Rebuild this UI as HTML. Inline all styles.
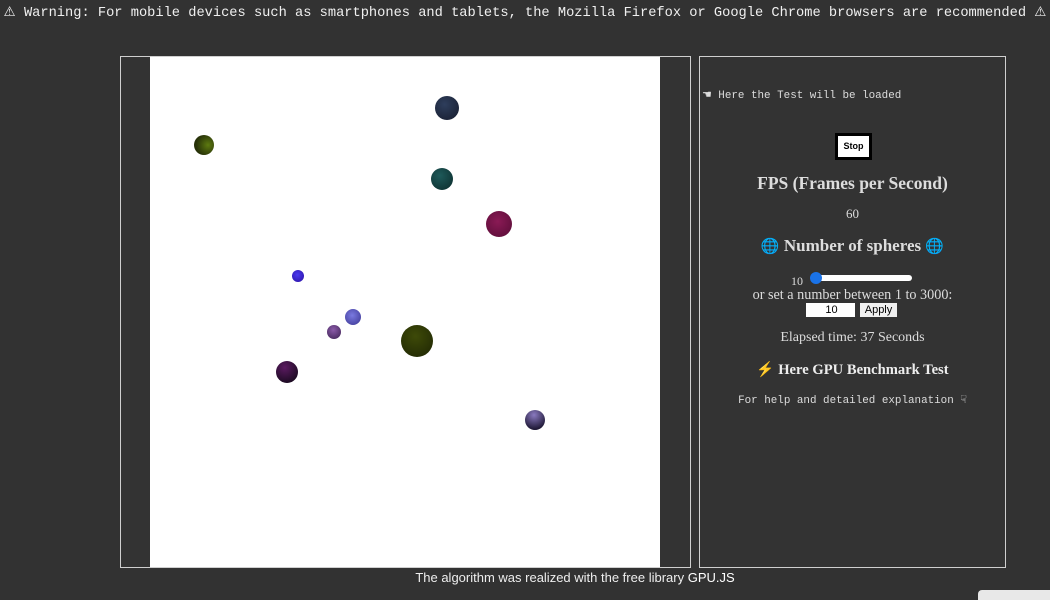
<!DOCTYPE html>
<html><head><meta charset="utf-8"><style>
html,body{margin:0;padding:0;width:1050px;height:600px;overflow:hidden;background:#323232;color:#eee;position:relative}
.warn{position:absolute;left:0;top:4px;width:1050px;text-align:center;font:13.7px "Liberation Mono",monospace;color:#f0f0f0;white-space:nowrap}
.lbox{position:absolute;left:120px;top:56px;width:569px;height:510px;border:1px solid #cfcfcf;background:#333}
.canvas{position:absolute;left:150px;top:57px;width:510px;height:510px;background:#fff}
.rbox{position:absolute;left:699px;top:56px;width:305px;height:510px;border:1px solid #cfcfcf;background:#333;font-family:"Liberation Serif",serif;text-align:center}
.b{position:absolute;border-radius:50%}
.t{position:absolute;left:0;width:305px;text-align:center;white-space:nowrap}
.mono{font-family:"Liberation Mono",monospace;font-size:10.9px;color:#ddd;white-space:nowrap}
.foot{position:absolute;left:0;width:1150px;top:570px;text-align:center;font:13px "Liberation Sans",sans-serif;color:#eee}
</style></head><body>
<div class="warn">⚠ Warning: For mobile devices such as smartphones and tablets, the Mozilla Firefox or Google Chrome browsers are recommended ⚠</div>
<div class="lbox"></div>
<div class="canvas"></div>
<div class="b" style="left:435px;top:96px;width:24px;height:24px;background:radial-gradient(circle at 40% 35%,#2e3e5c,#1b2236 80%)"></div>
<div class="b" style="left:194px;top:135px;width:20px;height:20px;background:radial-gradient(circle at 70% 50%,#5d7a10,#263008 70%)"></div>
<div class="b" style="left:431px;top:168px;width:22px;height:22px;background:radial-gradient(circle at 40% 35%,#1e5a5a,#0f3434 80%)"></div>
<div class="b" style="left:486px;top:211px;width:26px;height:26px;background:radial-gradient(circle at 45% 40%,#8a1a55,#5e0e3a 85%)"></div>
<div class="b" style="left:292px;top:270px;width:12px;height:12px;background:radial-gradient(circle at 45% 40%,#4a3af0,#2a10a0)"></div>
<div class="b" style="left:345px;top:309px;width:16px;height:16px;background:radial-gradient(circle at 45% 40%,#7a7ae0,#3a3490)"></div>
<div class="b" style="left:327px;top:325px;width:14px;height:14px;background:radial-gradient(circle at 45% 35%,#8a5aa8,#3a2050)"></div>
<div class="b" style="left:401px;top:325px;width:32px;height:32px;background:radial-gradient(circle at 45% 35%,#3e4a08,#222a04 85%)"></div>
<div class="b" style="left:276px;top:361px;width:22px;height:22px;background:radial-gradient(circle at 40% 30%,#5a1a60,#1a0a20 80%)"></div>
<div class="b" style="left:525px;top:410px;width:20px;height:20px;background:radial-gradient(circle at 45% 25%,#8a7ac0,#1a1430 80%)"></div>
<div class="rbox">
<div class="mono" style="position:absolute;left:2px;top:31px;text-align:left">☚ Here the Test will be loaded</div>
<div style="position:absolute;left:135px;top:76px;width:31px;height:21px;background:#fff;border:3px solid #000;font:bold 9px 'Liberation Sans',sans-serif;color:#000;line-height:21px;text-align:center">Stop</div>
<div class="t" style="top:116px;font-weight:bold;font-size:17.5px;color:#ddd">FPS (Frames per Second)</div>
<div class="t" style="top:149px;font-size:13px;color:#ddd">60</div>
<div class="t" style="top:179px;font-weight:bold;font-size:17px;color:#ddd"><span style="color:#9cc6e8;font-size:15px">🌐</span> Number of spheres <span style="color:#9cc6e8;font-size:15px">🌐</span></div>
<div style="position:absolute;left:91px;top:217px;font-size:12px;color:#ddd">10</div>
<div style="position:absolute;left:112px;top:218px;width:100px;height:6px;background:#fff;border-radius:4px"></div>
<div style="position:absolute;left:110px;top:215px;width:12px;height:12px;background:#1a73e8;border-radius:50%"></div>
<div class="t" style="top:230px;font-size:14.2px;color:#ddd">or set a number between 1 to 3000:</div>
<div style="position:absolute;left:106px;top:246px;width:47px;height:14px;background:#fff;color:#000;font:11px 'Liberation Sans',sans-serif;line-height:14px;padding-left:2px">10</div>
<div style="position:absolute;left:160px;top:246px;width:37px;height:14px;background:#f0f0f0;color:#000;font:11px 'Liberation Sans',sans-serif;line-height:14px;text-align:center">Apply</div>
<div class="t" style="top:273px;font-size:14px;color:#ddd">Elapsed time: 37 Seconds</div>
<div class="t" style="top:303px;font-weight:bold;font-size:14.6px;color:#eee"><span style="color:#e8843a">⚡</span> Here GPU Benchmark Test</div>
<div class="t mono" style="top:336px">For help and detailed explanation ☟</div>
</div>
<div class="foot">The algorithm was realized with the free library <span style="color:#fff">GPU.JS</span></div>
<div style="position:absolute;left:978px;top:590px;width:80px;height:14px;background:#e8e8e8;border-radius:4px"></div>
</body></html>
